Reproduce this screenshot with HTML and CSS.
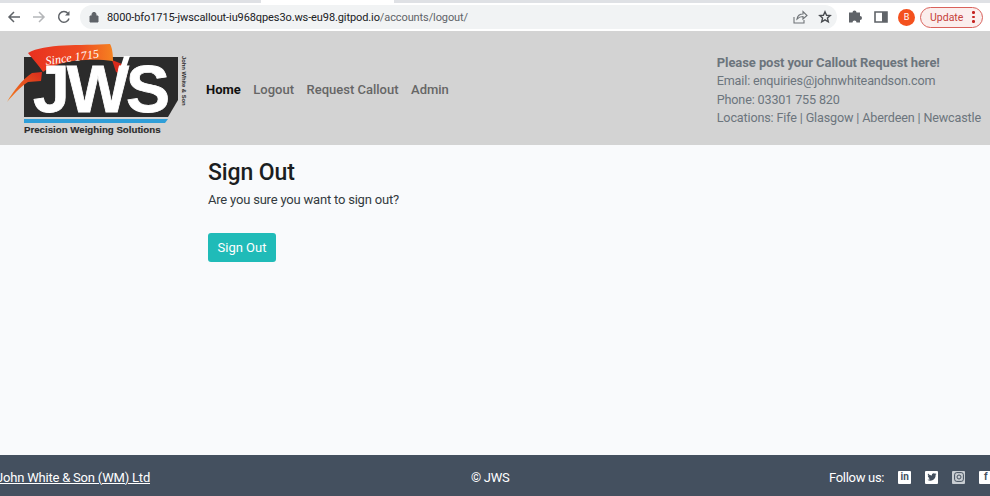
FILE: index.html
```html
<!DOCTYPE html>
<html lang="en">
<head>
<meta charset="utf-8">
<title>Sign Out</title>
<link rel="stylesheet" href="styles.css">
</head>
<body>
<div class="chrome">
  <div class="tabstrip"><span class="tabstrip-active"></span></div>
  <div class="toolbar">
    <svg class="tb-icon" width="16" height="16" viewBox="0 0 16 16"><path d="M14 8H3M8 3L3 8l5 5" fill="none" stroke="#5f6368" stroke-width="1.5"/></svg>
    <svg class="tb-icon" width="16" height="16" viewBox="0 0 16 16"><path d="M2 8h11M8 3l5 5-5 5" fill="none" stroke="#b4b6b9" stroke-width="1.5"/></svg>
    <svg class="tb-icon" width="16" height="16" viewBox="0 0 16 16"><path d="M13 9.5A5.3 5.3 0 1 1 12 4.5" fill="none" stroke="#5f6368" stroke-width="1.5"/><path d="M13.5 2v4.5H9z" fill="#5f6368"/></svg>
    <div class="omnibox">
      <svg class="lock" width="10" height="12" viewBox="0 0 10 12"><path d="M1 5h8v6H1zM3 5V3.4a2 2 0 0 1 4 0V5" fill="#5f6368" stroke="#5f6368"/></svg>
      <span class="url">8000-bfo1715-jwscallout-iu968qpes3o.ws-eu98.gitpod.io<span class="url-path">/accounts/logout/</span></span>
      <span class="omni-actions">
        <svg width="16" height="16" viewBox="0 0 16 16"><path d="M2 8v6h10v-3M5 10c.5-3 3-5 6-5V2.500l4 4-4 3.500V7.500c-2.500 0-4.500 1-6 2.500z" fill="none" stroke="#6f7377" stroke-width="1.100"/></svg>
        <svg width="14" height="14" viewBox="0 0 16 16"><path d="M8 2l1.800 4 4.200.4-3.200 2.800 1 4.300L8 11.200 4.200 13.500l1-4.300L2 6.400 6.200 6z" fill="none" stroke="#4a4d51" stroke-width="1.600"/></svg>
      </span>
    </div>
    <svg class="ext" width="16" height="16" viewBox="0 0 16 16"><path d="M2 5h3.500a2 2 0 1 1 4 0H13v3.500a2 2 0 1 1 0 4V15H9.500a2 2 0 1 0-4 0H2z" fill="#5f6368" transform="translate(0 -1.500)"/></svg>
    <svg class="side" width="14" height="14" viewBox="0 0 14 14"><path d="M1 2h12v10H1z" fill="none" stroke="#5f6368" stroke-width="1.600"/><path d="M8 2h5v10H8z" fill="#5f6368"/></svg>
    <span class="avatar">B</span>
    <span class="update">Update<span class="dots"><i></i><i></i><i></i></span></span>
  </div>
</div>
<header class="site-header">
  <svg class="logo" width="190" height="114" viewBox="0 31 190 114">
    <defs>
      <linearGradient id="rib" x1="0" x2="1"><stop offset="0" stop-color="#e8301f"/><stop offset=".6" stop-color="#ee4a22"/><stop offset="1" stop-color="#f58220"/></linearGradient>
      <linearGradient id="tail" x1="0" y1="1" x2="1" y2="0"><stop offset="0" stop-color="#f58220"/><stop offset="1" stop-color="#d92a1c"/></linearGradient>
    </defs>
    <path d="M24 57H178V100L168 117H24z" fill="#2b2b2b"/>
    <path d="M24 119H168L165 123H24z" fill="#2f9ed8"/>
    <path d="M7 102C14 90 22 80 32 73L42 72L41 81L28 82C20 87 13 95 7 102z" fill="url(#tail)"/>
    <path d="M112 60L122 64L127 77L116 72z" fill="#d92a1c"/>
    <path d="M28 53C45 43 80 46 110 44C112 47 113 54 113 61C95 59 62 58 43 72C39 66 33 59 28 53z" fill="url(#rib)"/>
    <text class="logo-since" transform="translate(46 65) rotate(-8)">Since 1715</text>
    <text class="logo-jws" x="33" y="112">JWS</text>
    <path d="M117 78L124 56H130L122 80z" fill="#fff"/>
    <text class="logo-sub" x="24" y="133">Precision Weighing Solutions</text>
    <text class="logo-side" transform="translate(182 56) rotate(90)">John White &amp; Son</text>
  </svg>
  <nav class="nav">
    <a class="nav-link active" href="#">Home</a>
    <a class="nav-link" href="#">Logout</a>
    <a class="nav-link" href="#">Request Callout</a>
    <a class="nav-link" href="#">Admin</a>
  </nav>
  <div class="contact">
    <strong>Please post your Callout Request here!</strong>
    <span>Email: enquiries@johnwhiteandson.com</span>
    <span>Phone: 03301 755 820</span>
    <span>Locations: Fife | Glasgow | Aberdeen | Newcastle</span>
  </div>
</header>
<main class="main">
  <h1 class="title">Sign Out</h1>
  <p class="lead">Are you sure you want to sign out?</p>
  <button class="btn" type="button">Sign Out</button>
</main>
<footer class="footer">
  <a class="footer-link" href="#">John White &amp; Son (WM) Ltd</a>
  <span class="copy">© JWS</span>
  <div class="follow">
    <span class="follow-label">Follow us:</span>
    <span class="social">in</span>
    <span class="social"><svg width="10" height="10" viewBox="0 0 24 24"><path d="M23 5a9 9 0 0 1-2.600.7 4.500 4.500 0 0 0 2-2.500 9 9 0 0 1-2.900 1.100 4.500 4.500 0 0 0-7.700 4.100A12.800 12.800 0 0 1 2.500 3.700a4.500 4.500 0 0 0 1.400 6 4.500 4.500 0 0 1-2-.6 4.500 4.500 0 0 0 3.600 4.500 4.500 4.500 0 0 1-2 .1 4.500 4.500 0 0 0 4.200 3.100A9 9 0 0 1 1 18.700 12.800 12.800 0 0 0 20.700 7.300 9 9 0 0 0 23 5z" fill="#44505f"/></svg></span>
    <span class="social social-ig"><svg width="10" height="10" viewBox="0 0 10 10"><rect x=".6" y=".6" width="8.800" height="8.800" rx="2.200" fill="none" stroke="#44505f"/><circle cx="5" cy="5" r="2" fill="none" stroke="#44505f"/></svg></span>
    <span class="social social-fb">f</span>
  </div>
</footer>
</body>
</html>
```
FILE: styles.css
```css
* { box-sizing: border-box; }
html, body { margin: 0; height: 100%; overflow: hidden; }
body {
  width: 990px;
  height: 496px;
  display: flex;
  flex-direction: column;
  font-family: Roboto, "Noto Sans", sans-serif;
  background: #f9fafc;
  color: #212529;
}
.chrome { height: 31px; background: #fff; flex: none; }
.tabstrip { height: 3px; background: #dfe1e5; display: flex; padding-left: 261px; }
.tabstrip-active { width: 133px; background: #fff; }
.toolbar { height: 28px; display: flex; align-items: center; padding-left: 6px; }
.tb-icon { margin-right: 9px; flex: none; }
.omnibox {
  width: 757px; height: 24px; margin-left: -1px; background: #f1f3f4; border-radius: 12px;
  display: flex; align-items: center; padding-left: 9px; flex: none;
}
.lock { margin-right: 8px; flex: none; }
.url { font-size: 11px; letter-spacing: -.1px; color: #202124; white-space: nowrap; }
.url-path { color: #5f6368; }
.omni-actions { margin-left: auto; display: flex; gap: 10px; padding-right: 5px; align-items: center; }
.ext { margin-left: 10px; flex: none; }
.side { margin-left: 11px; flex: none; }
.avatar {
  width: 17px; height: 17px; margin-left: 10px; border-radius: 50%; background: #f4511e; color: #fff;
  font-size: 9px; display: flex; align-items: center; justify-content: center; flex: none;
}
.update {
  width: 63px; height: 21px; margin-left: 5px; border: 1px solid #d9625c; border-radius: 11px; background: #fbeeed;
  color: #c5403a; font-size: 10.500px; display: flex; align-items: center; padding-left: 9px; flex: none;
}
.dots { margin-left: 9px; display: flex; flex-direction: column; gap: 2px; }
.dots i { width: 2.500px; height: 2.500px; border-radius: 50%; background: #c5221f; display: block; }
.site-header { height: 114px; background: #d3d3d3; display: flex; align-items: center; flex: none; }
.logo { flex: none; }
.logo-since { font: italic 12px "Liberation Serif", serif; fill: #fff; letter-spacing: .1px; }
.logo-jws { font: bold 66px "Liberation Sans", sans-serif; fill: #fff; stroke: #fff; stroke-width: .8px; letter-spacing: -3px; }
.logo-sub { font: bold 9.700px "Liberation Sans", sans-serif; fill: #2b2b2b; stroke: #2b2b2b; stroke-width: .15px; }
.logo-side { font: bold 5.800px "Liberation Sans", sans-serif; fill: #2b2b2b; }
.nav { display: flex; gap: 12.500px; margin: 2px 0 0 16px; }
.nav-link { font-size: 13px; font-weight: 500; color: #666; text-decoration: none; white-space: nowrap; }
.nav-link.active { color: #111; font-weight: 700; }
.contact {
  margin: 5px 0 0 auto; padding-right: 9px; display: flex; flex-direction: column;
  font-size: 13px; line-height: 18.500px; color: #6c757d; white-space: nowrap;
}
.contact strong { font-weight: 700; letter-spacing: -.08px; }
.contact span { font-size: 12.600px; letter-spacing: -.15px; }
.main { flex: 1; padding: 13px 0 0 208px; }
.title { margin: 0; font-size: 23px; line-height: 30px; font-weight: 500; letter-spacing: -.1px; color: #1b1e21; }
.lead { margin: 2px 0 0; font-size: 13px; letter-spacing: -.2px; line-height: 20px; color: #343a40; }
.btn {
  display: block; margin-top: 23px; width: 68px; height: 29px; border: 0; border-radius: 3px; padding: 0;
  background: #20bbb8; color: #fff; font: 13px Roboto, sans-serif;
}
.footer {
  height: 41px; padding-top: 3px; background: #44505f; color: #fff; flex: none; display: grid; align-items: center;
  grid-template-columns: 475px 358px 1fr; margin-right: -12px; margin-left: -4px; font-size: 13px;
}
.footer-link { color: #fff; letter-spacing: -.2px; white-space: nowrap; }
.copy { white-space: nowrap; letter-spacing: -.3px; }
.follow { display: flex; align-items: center; }
.follow-label { margin-right: 14px; letter-spacing: -.3px; white-space: nowrap; }
.social {
  width: 13px; height: 13px; background: #fff; color: #44505f; border-radius: 1px; margin-right: 14px;
  display: flex; align-items: center; justify-content: center; font-size: 10px; font-weight: 700; line-height: 1; flex: none;
}
.social-ig { background: #c8cdd2; }
.social-fb { margin-right: 0; }
```
